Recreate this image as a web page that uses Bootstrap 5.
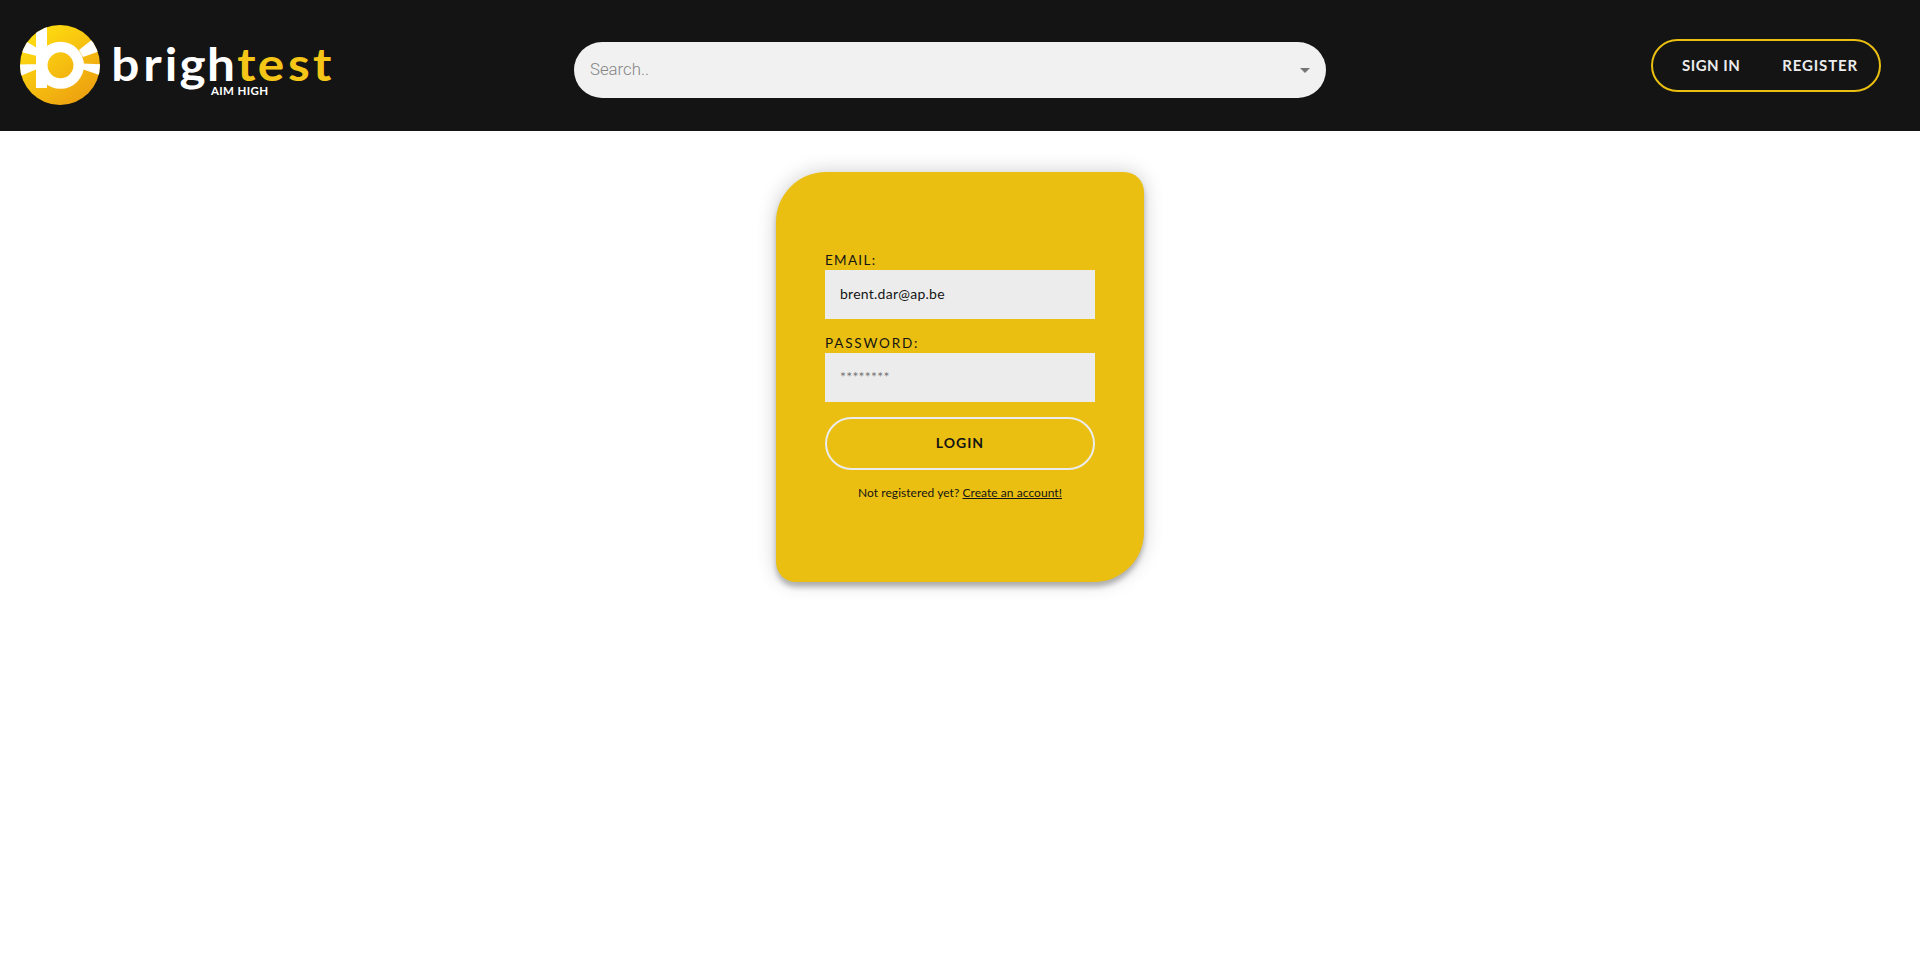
<!DOCTYPE html>
<html lang="en">
<head>
<meta charset="utf-8">
<meta name="viewport" content="width=device-width, initial-scale=1">
<title>Brightest</title>
<link href="https://cdn.jsdelivr.net/npm/bootstrap@5.3.0/dist/css/bootstrap.min.css" rel="stylesheet">
<style>
body{font-family:Lato,"Open Sans",sans-serif;color:#141414;background:#fff}
.topbar{height:131px;background:#141414;padding-left:20px;padding-right:39px}
.brand-logo{width:320px;height:84px;display:block}
.side{flex:0 0 554px}
.search-box{width:752px;height:56px;border-radius:28px;background:#f1f1f1;padding:0 16px;margin-top:9px}
.search-box input{font:300 16.8px "Roboto",sans-serif;color:#444;outline:0;line-height:24px;margin-top:-2px}
.search-box input::placeholder{color:#858585;opacity:1}
.caret{border:5px solid transparent;border-top-color:#757575;border-bottom:0}
.auth{width:230px;height:53px;border:2px solid #eabf12;border-radius:27px;font-size:15px;font-weight:700;padding:0 21px 0 29px}
.auth a{color:#ececec;text-decoration:none;letter-spacing:.5px}
.auth a+a{letter-spacing:.85px}
.page{min-height:838px}
.login-card{width:368px;height:410px;margin-top:41px;padding:79px 49px 0;background:#eabf12;border-radius:50px 20px;box-shadow:0 0 20px rgba(0,0,0,.2),0 5px 5px rgba(0,0,0,.24)}
.login-card label{font-weight:400;font-size:13.5px;line-height:19px;height:19px;display:block;letter-spacing:1.3px}
.field{height:49px;background:#ececec;padding:0 15px 2px;font-size:14px;letter-spacing:.25px;color:#141414;outline:0;margin-bottom:15px}
.login-card .field+label{letter-spacing:1.8px}
.field::placeholder{color:#757575;opacity:1}
.login-btn{height:53px;border:2px solid #ececec;border-radius:27px;background:none;font-size:14px;font-weight:700;letter-spacing:1px;color:#141414;padding-bottom:3px}
.hint{font-size:12px;line-height:18px;margin-top:14px;letter-spacing:.05px}
.hint a{color:#141414}
</style>
</head>
<body>
<header class="topbar d-flex align-items-center">
  <div class="side">
    <svg class="brand-logo" viewBox="20 24 320 84" role="img" aria-label="brightest, aim high">
      <defs>
        <linearGradient id="sun" x1=".15" y1=".1" x2=".8" y2=".95"><stop offset="0" stop-color="#ffde10"/><stop offset="1" stop-color="#eda010"/></linearGradient>
        <clipPath id="disc"><circle cx="60" cy="65" r="40"/></clipPath>
      </defs>
      <g clip-path="url(#disc)">
        <rect x="20" y="25" width="80" height="80" fill="url(#sun)"/>
        <path fill="#fff" d="M36 20H47V88H36ZM22 39 37 48V56L17 51ZM15 64.5 37 64V69L18 77ZM79 50 94 38 103 50 83 57ZM82 63.5 104 64.5 102 76 82 69Z"/>
        <circle cx="60.5" cy="65.3" r="18.2" fill="none" stroke="#fff" stroke-width="10.5"/>
      </g>
      <g font-family="Lato, sans-serif" font-weight="700">
        <g font-size="45" transform="scale(1.1 1)">
          <text y="81.5" fill="#fff" x="101.2 130.2 149.8 163.2 188.2">brigh</text>
          <text y="81.5" fill="#f5c518" x="215.6 234.4 261.8 284.6">test</text>
        </g>
        <text font-size="11.5" y="95" x="211" fill="#fff" textLength="57">AIM HIGH</text>
      </g>
    </svg>
  </div>
  <div class="search-box d-flex align-items-center">
    <input class="border-0 bg-transparent flex-grow-1 p-0" type="text" placeholder="Search.." aria-label="Search">
    <span class="caret"></span>
  </div>
  <nav class="auth ms-auto d-flex align-items-center justify-content-between">
    <a href="#">SIGN IN</a>
    <a href="#">REGISTER</a>
  </nav>
</header>
<main class="page d-flex justify-content-center align-items-start">
  <form class="login-card">
    <label for="email">EMAIL:</label>
    <input id="email" class="field border-0 w-100 d-block" type="text" value="brent.dar@ap.be">
    <label for="password">PASSWORD:</label>
    <input id="password" class="field border-0 w-100 d-block" type="password" placeholder="********">
    <button class="login-btn w-100 d-block" type="button">LOGIN</button>
    <p class="hint text-center mb-0">Not registered yet? <a href="#">Create an account!</a></p>
  </form>
</main>
<script src="https://cdn.jsdelivr.net/npm/bootstrap@5.3.0/dist/js/bootstrap.bundle.min.js"></script>
</body>
</html>
